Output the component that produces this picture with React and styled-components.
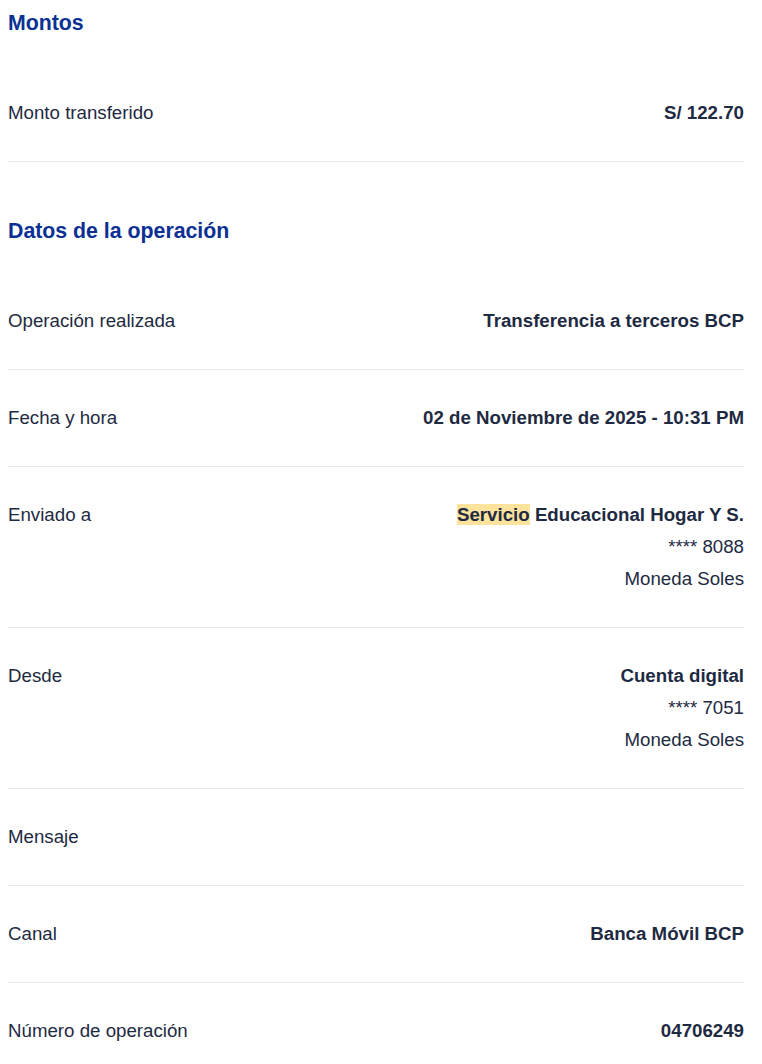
import React from "react";
import styled, { createGlobalStyle } from "styled-components";

const GlobalStyle = createGlobalStyle`
  body {
    margin: 0;
    background: #fff;
    font-family: "Liberation Sans", Arial, sans-serif;
    color: #1e2a42;
  }
`;

const Page = styled.div`
  width: 736px;
  padding: 9px 0 0 8px;
`;

const Section = styled.section`
  & + & {
    margin-top: 55px;
  }
`;

const SectionTitle = styled.h2`
  margin: 0 0 28px;
  font-size: 21.3px;
  line-height: 28px;
  font-weight: 700;
  color: #0a3094;
`;

const Row = styled.div`
  display: flex;
  justify-content: space-between;
  align-items: flex-start;
  padding: 32px 0;
  border-bottom: ${(props) => (props.last ? "none" : "1px solid #e9e9ef")};
  font-size: 18.7px;
  line-height: 32px;
`;

const Label = styled.div`
  flex: 0 0 auto;
`;

const Value = styled.div`
  display: flex;
  flex-direction: column;
  align-items: flex-end;
  text-align: right;
`;

const Line = styled.span`
  font-weight: ${(props) => (props.bold ? 700 : 400)};
  white-space: nowrap;
`;

const Mark = styled.mark`
  background: #fde39b;
  color: inherit;
  padding: 0;
`;

const montos = [{ label: "Monto transferido", lines: ["S/ 122.70"] }];

const operacion = [
  { label: "Operación realizada", lines: ["Transferencia a terceros BCP"] },
  { label: "Fecha y hora", lines: ["02 de Noviembre de 2025 - 10:31 PM"] },
  {
    label: "Enviado a",
    lines: [
      <>
        <Mark>Servicio</Mark> Educacional Hogar Y S.
      </>,
      "**** 8088",
      "Moneda Soles",
    ],
  },
  {
    label: "Desde",
    lines: ["Cuenta digital", "**** 7051", "Moneda Soles"],
  },
  { label: "Mensaje", lines: [] },
  { label: "Canal", lines: ["Banca Móvil BCP"] },
  { label: "Número de operación", lines: ["04706249"] },
];

const DetailRow = ({ item, last }) => (
  <Row last={last}>
    <Label>{item.label}</Label>
    <Value>
      {item.lines.map((line, i) => (
        <Line key={i} bold={i === 0}>
          {line}
        </Line>
      ))}
    </Value>
  </Row>
);

export default function App() {
  return (
    <Page>
      <GlobalStyle />
      <Section>
        <SectionTitle>Montos</SectionTitle>
        {montos.map((item) => (
          <DetailRow key={item.label} item={item} />
        ))}
      </Section>
      <Section>
        <SectionTitle>Datos de la operación</SectionTitle>
        {operacion.map((item, i) => (
          <DetailRow
            key={item.label}
            item={item}
            last={i === operacion.length - 1}
          />
        ))}
      </Section>
    </Page>
  );
}
